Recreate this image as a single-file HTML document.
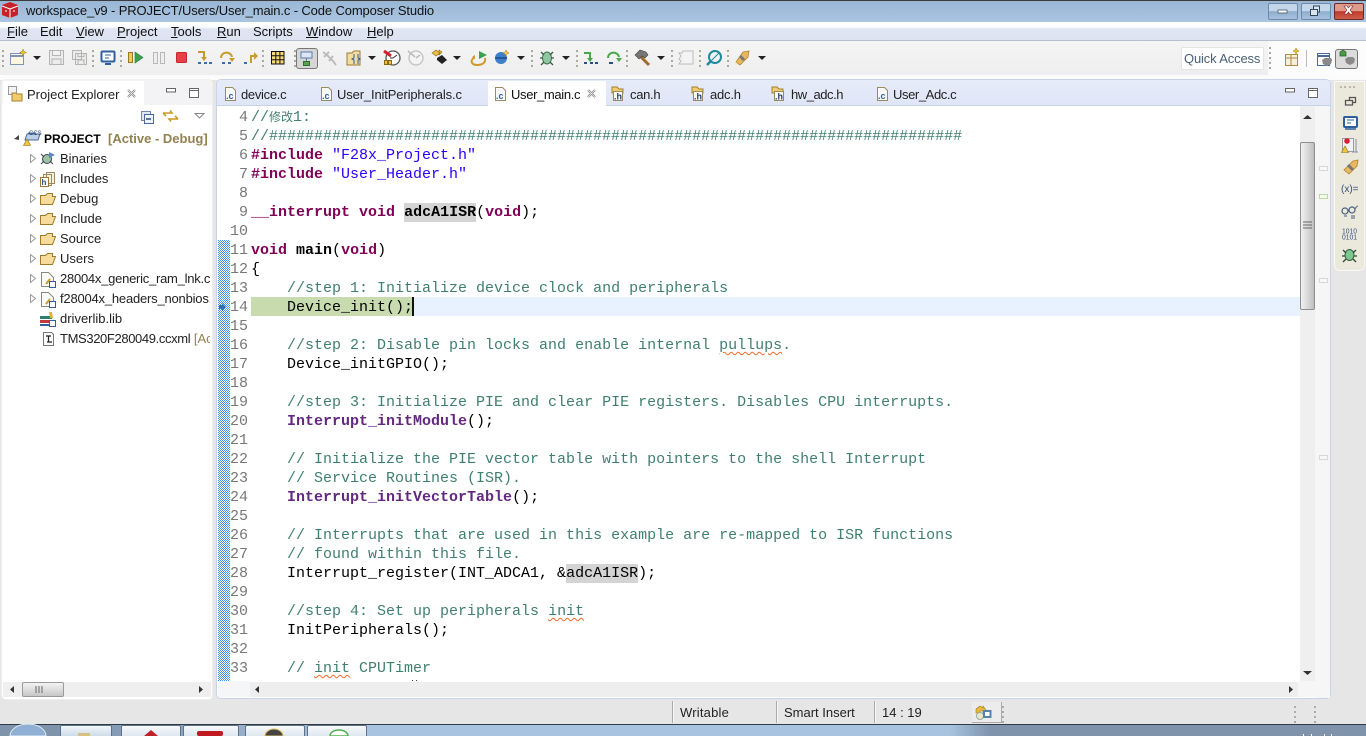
<!DOCTYPE html>
<html><head><meta charset="utf-8"><title>workspace_v9</title>
<style>
html,body{margin:0;padding:0;width:1366px;height:736px;overflow:hidden;background:#e6e6e6}
body{position:relative;font-family:"Liberation Sans","Noto Sans CJK SC",sans-serif;font-size:13px;color:#1a1a1a}
.a{position:absolute}
.t{position:absolute;white-space:nowrap;line-height:16px}
.m{position:absolute;top:24px;white-space:nowrap;line-height:16px;font-size:13px;color:#111}
.tab{position:absolute;top:87px;white-space:nowrap;line-height:16px;color:#222;letter-spacing:-.3px}
.tr{position:absolute;left:60px;white-space:nowrap;line-height:16px;color:#222}
pre,.code{margin:0;font-family:"Liberation Mono","Noto Sans CJK SC",monospace;font-size:15px;color:#000}
.l{height:19px;line-height:19px;white-space:pre}
.c{color:#3f7f6f}.k{color:#7f0055;font-weight:bold}.s{color:#2a00ff}.f{color:#642880;font-weight:bold}.b{font-weight:bold}
.h{background:#d4d4d4;display:inline-block;height:19px}
.w{text-decoration:underline wavy #f06a28;text-decoration-thickness:1px;text-underline-offset:2px}
.cj{font-size:12px;line-height:12px}
.sb{position:absolute;top:701px;width:1px;height:22px;background:#aaa;box-shadow:1px 0 0 #f7f7f7}
</style></head><body>

<!-- title bar -->
<div class="a" style="left:0;top:0;width:1366px;height:22px;background:linear-gradient(#98b6d4,#abc5e0)"></div>
<div class="a" style="left:0;top:0;width:1366px;height:1px;background:#3c3c3c"></div>
<div class="t" style="left:26px;top:3px;color:#111;font-size:13px;letter-spacing:-.13px">workspace_v9 - PROJECT/Users/User_main.c - Code Composer Studio</div>

<!-- window buttons -->
<div class="a" style="left:1268px;top:3px;width:28px;height:15px;border:1px solid #6f8aa8;border-radius:2px;background:linear-gradient(#c3d6ea 0 45%,#8fadcd 50%,#a6c1dd)"></div>
<div class="a" style="left:1301px;top:3px;width:28px;height:15px;border:1px solid #6f8aa8;border-radius:2px;background:linear-gradient(#c3d6ea 0 45%,#8fadcd 50%,#a6c1dd)"></div>
<div class="a" style="left:1334px;top:3px;width:28px;height:15px;border:1px solid #6e2a2a;border-radius:2px;background:linear-gradient(#e09a8c 0 45%,#c0392b 50%,#cf5f4a)"></div>

<!-- menu bar -->
<div class="a" style="left:0;top:22px;width:1366px;height:18px;background:linear-gradient(#ffffff 0,#fbfcfe 5px,#dfe4f2 7px,#dde3f1)"></div>
<div class="a" style="left:0;top:40px;width:1366px;height:1px;background:#b6c0cf"></div>
<div class="m" style="left:7px"><u>F</u>ile</div>
<div class="m" style="left:40px">Edit</div>
<div class="m" style="left:76px"><u>V</u>iew</div>
<div class="m" style="left:117px"><u>P</u>roject</div>
<div class="m" style="left:171px"><u>T</u>ools</div>
<div class="m" style="left:217px"><u>R</u>un</div>
<div class="m" style="left:253px">Scripts</div>
<div class="m" style="left:306px"><u>W</u>indow</div>
<div class="m" style="left:367px"><u>H</u>elp</div>

<!-- toolbar -->
<div class="a" style="left:0;top:41px;width:1366px;height:34px;background:linear-gradient(#f5f5f5,#eeeeee)"></div>
<div class="a" style="left:1268px;top:41px;width:98px;height:34px;background:#fcfcfc"></div>
<div class="a" style="left:0;top:75px;width:1366px;height:5px;background:#fbfbfb"></div>
<div class="a" style="left:1181px;top:47px;width:81px;height:21px;background:#fff;border:1px solid #e4e4e4;border-radius:2px"></div>
<div class="t" style="left:1184px;top:51px;color:#4a5f78;font-size:13px;letter-spacing:-.15px">Quick Access</div>
<div class="a" style="left:296px;top:48px;width:20px;height:19px;background:#d6d6d6;border:1px solid #777;border-radius:3px"></div>
<div class="a" style="left:1335px;top:49px;width:21px;height:18px;background:#dcdcdc;border:1px solid #777;border-radius:3px"></div>

<!-- left panel -->
<div class="a" style="left:2px;top:80px;width:210px;height:619px;background:#fff;border-radius:4px;box-shadow:0 0 0 1px #efefef"></div>
<div class="a" style="left:2px;top:80px;width:210px;height:25px;background:#f3f3f5;border-radius:4px 4px 0 0"></div>
<div class="a" style="left:3px;top:81px;width:141px;height:25px;background:#fff"></div>
<div class="t" style="left:27px;top:87px;color:#222">Project Explorer</div>

<!-- tree -->
<div class="a" style="left:3px;top:125px;width:207px;height:225px;overflow:hidden">
<div class="t" style="left:41px;top:6px;color:#000;font-weight:bold;font-size:12px">PROJECT</div>
<div class="t" style="left:105px;top:6px;color:#93814f;font-weight:bold">[Active - Debug]</div>
<div class="tr" style="left:57px;top:26px">Binaries</div>
<div class="tr" style="left:57px;top:46px">Includes</div>
<div class="tr" style="left:57px;top:66px">Debug</div>
<div class="tr" style="left:57px;top:86px">Include</div>
<div class="tr" style="left:57px;top:106px">Source</div>
<div class="tr" style="left:57px;top:126px">Users</div>
<div class="tr" style="left:57px;top:146px;letter-spacing:-.25px">28004x_generic_ram_lnk.cmd</div>
<div class="tr" style="left:57px;top:166px;letter-spacing:-.2px">f28004x_headers_nonbios.cmd</div>
<div class="tr" style="left:57px;top:186px">driverlib.lib</div>
<div class="tr" style="left:57px;top:206px"><span style="letter-spacing:-.37px">TMS320F280049.ccxml</span> <span style="color:#93814f">[Active]</span></div>
</div>

<!-- left scrollbar -->
<div class="a" style="left:3px;top:682px;width:208px;height:15px;background:#efefef"></div>
<div class="a" style="left:22px;top:682px;width:40px;height:13px;border:1px solid #9a9a9a;border-radius:2px;background:linear-gradient(#f2f2f2,#dedede 50%,#c6c6c6)"></div>

<!-- editor frame -->
<div class="a" style="left:217px;top:80px;width:1113px;height:618px;background:#fff;border-radius:4px;box-shadow:0 0 0 1px #c9d3e8"></div>
<div class="a" style="left:217px;top:80px;width:1113px;height:25px;background:linear-gradient(#e6ebf9,#dfe6f7);border-radius:4px 4px 0 0"></div>
<div class="a" style="left:217px;top:105px;width:1113px;height:1px;background:#c9d3e8"></div>
<div class="a" style="left:488px;top:81px;width:118px;height:25px;background:#fff"></div>
<div class="tab" style="left:241px">device.c</div>
<div class="tab" style="left:337px;letter-spacing:-.14px">User_InitPeripherals.c</div>
<div class="tab" style="left:511px;color:#111;letter-spacing:-.35px">User_main.c</div>
<div class="tab" style="left:630px">can.h</div>
<div class="tab" style="left:710px;letter-spacing:-.2px">adc.h</div>
<div class="tab" style="left:791px;letter-spacing:-.45px">hw_adc.h</div>
<div class="tab" style="left:893px;letter-spacing:-.4px">User_Adc.c</div>

<!-- current line -->
<div class="a" style="left:251px;top:297px;width:1049px;height:19px;background:#e8f2fe"></div>
<div class="a" style="left:251px;top:297px;width:162px;height:19px;background:#c7dbae"></div>
<div class="a" style="left:412px;top:297px;width:2px;height:19px;background:#111"></div>

<!-- line numbers -->
<div class="a code" style="left:226px;top:108px;width:22px;height:573px;overflow:hidden;text-align:right;color:#787878"><div class="l">4</div><div class="l">5</div><div class="l">6</div><div class="l">7</div><div class="l">8</div><div class="l">9</div><div class="l">10</div><div class="l">11</div><div class="l">12</div><div class="l">13</div><div class="l">14</div><div class="l">15</div><div class="l">16</div><div class="l">17</div><div class="l">18</div><div class="l">19</div><div class="l">20</div><div class="l">21</div><div class="l">22</div><div class="l">23</div><div class="l">24</div><div class="l">25</div><div class="l">26</div><div class="l">27</div><div class="l">28</div><div class="l">29</div><div class="l">30</div><div class="l">31</div><div class="l">32</div><div class="l">33</div></div>

<!-- code -->
<div class="a code" style="left:251px;top:108px;width:1049px;height:573px;overflow:hidden">
<div class="l"><span class="c">//<span class="cj">修改</span>1:</span></div>
<div class="l"><span class="c">//#############################################################################</span></div>
<div class="l"><span class="k">#include</span> <span class="s">"F28x_Project.h"</span></div>
<div class="l"><span class="k">#include</span> <span class="s">"User_Header.h"</span></div>
<div class="l"></div>
<div class="l"><span class="k">__interrupt</span> <span class="k">void</span> <span class="h b">adcA1ISR</span>(<span class="k">void</span>);</div>
<div class="l"></div>
<div class="l"><span class="k">void</span> <span class="b">main</span>(<span class="k">void</span>)</div>
<div class="l">{</div>
<div class="l">    <span class="c">//step 1: Initialize device clock and peripherals</span></div>
<div class="l">    Device_init();</div>
<div class="l"></div>
<div class="l">    <span class="c">//step 2: Disable pin locks and enable internal <span class="w">pullups</span>.</span></div>
<div class="l">    Device_initGPIO();</div>
<div class="l"></div>
<div class="l">    <span class="c">//step 3: Initialize PIE and clear PIE registers. Disables CPU interrupts.</span></div>
<div class="l">    <span class="f">Interrupt_initModule</span>();</div>
<div class="l"></div>
<div class="l">    <span class="c">// Initialize the PIE vector table with pointers to the shell Interrupt</span></div>
<div class="l">    <span class="c">// Service Routines (ISR).</span></div>
<div class="l">    <span class="f">Interrupt_initVectorTable</span>();</div>
<div class="l"></div>
<div class="l">    <span class="c">// Interrupts that are used in this example are re-mapped to ISR functions</span></div>
<div class="l">    <span class="c">// found within this file.</span></div>
<div class="l">    Interrupt_register(INT_ADCA1, &amp;<span class="h">adcA1ISR</span>);</div>
<div class="l"></div>
<div class="l">    <span class="c">//step 4: Set up peripherals <span class="w">init</span></span></div>
<div class="l">    InitPeripherals();</div>
<div class="l"></div>
<div class="l">    <span class="c">// <span class="w">init</span> CPUTimer</span></div>
</div>
<div class="a" style="left:412px;top:680px;width:1px;height:1px;background:#444;box-shadow:4px 0 0 #444"></div>

<!-- editor scrollbars -->
<div class="a" style="left:218px;top:681px;width:32px;height:16px;background:#f5f6f8"></div>
<div class="a" style="left:250px;top:682px;width:1048px;height:15px;background:#eeeeee"></div>
<div class="a" style="left:1298px;top:681px;width:32px;height:16px;background:#f6f6f6"></div>
<div class="a" style="left:1300px;top:106px;width:15px;height:575px;background:#efefef"></div>
<div class="a" style="left:1315px;top:106px;width:15px;height:592px;background:#f6f6f6"></div>
<div class="a" style="left:1300px;top:142px;width:13px;height:166px;border:1px solid #8f8f8f;border-radius:2px;background:linear-gradient(90deg,#f0f0f0,#dcdcdc 45%,#bdbdbd)"></div>
<div class="a" style="left:1319px;top:166px;width:7px;height:3px;border:1px solid #d8d8d8;background:#f8f8f8"></div>
<div class="a" style="left:1319px;top:194px;width:7px;height:3px;border:1px solid #bcd8a4;background:#f4faee"></div>
<div class="a" style="left:1319px;top:278px;width:7px;height:3px;border:1px solid #d8d8d8;background:#f8f8f8"></div>
<div class="a" style="left:1319px;top:455px;width:7px;height:3px;border:1px solid #d8d8d8;background:#f8f8f8"></div>

<!-- right trim -->
<div class="a" style="left:1334px;top:81px;width:29px;height:188px;background:#ebe8dc;border:1px solid #f8f8f4;border-radius:0 0 6px 6px"></div>

<!-- status -->
<div class="sb" style="left:672px"></div><div class="sb" style="left:776px"></div><div class="sb" style="left:874px"></div>
<div class="t" style="left:680px;top:705px;color:#222;letter-spacing:.2px">Writable</div>
<div class="t" style="left:784px;top:705px;color:#222">Smart Insert</div>
<div class="t" style="left:882px;top:705px;color:#222">14 : 19</div>
<div class="a" style="left:972px;top:702px;width:29px;height:20px;border-right:1px solid #aaa;border-bottom:1px solid #aaa;background:#ececec"></div>

<!-- taskbar -->
<div class="a" style="left:0;top:724px;width:1366px;height:12px;background:linear-gradient(90deg,#7f93ab 0,#7f93ab 60px,#a8c3e0 370px,#a8c3e0 950px,#7f93ab 990px,#7f93ab 1366px)"></div>
<div class="a" style="left:0;top:724px;width:1366px;height:1px;background:#2f3b47"></div>
<div class="a" style="left:60px;top:725px;width:50px;height:11px;background:linear-gradient(#f2f6fa,#c9d8e8);border:1px solid #5e7289;border-bottom:0;border-radius:2px 2px 0 0"></div>
<div class="a" style="left:121px;top:725px;width:58px;height:11px;background:linear-gradient(#f7f9fc,#dbe5ef);border:1px solid #5e7289;border-bottom:0;border-radius:2px 2px 0 0"></div>
<div class="a" style="left:183px;top:725px;width:54px;height:11px;background:linear-gradient(#f7f9fc,#dbe5ef);border:1px solid #5e7289;border-bottom:0;border-radius:2px 2px 0 0"></div>
<div class="a" style="left:245px;top:725px;width:58px;height:11px;background:linear-gradient(#f7f9fc,#dbe5ef);border:1px solid #5e7289;border-bottom:0;border-radius:2px 2px 0 0"></div>
<div class="a" style="left:307px;top:725px;width:58px;height:11px;background:linear-gradient(#f7f9fc,#dbe5ef);border:1px solid #5e7289;border-bottom:0;border-radius:2px 2px 0 0"></div>

<!-- icons overlay -->
<svg class="a" style="left:0;top:0" width="1366" height="736" viewBox="0 0 1366 736" fill="none">
<defs><pattern id="chk" width="2" height="2" patternUnits="userSpaceOnUse"><rect width="2" height="2" fill="#fff"/><rect width="1" height="1" fill="#3f90ea"/><rect x="1" y="1" width="1" height="1" fill="#3f90ea"/></pattern></defs>
<rect x="218" y="240" width="12" height="441" fill="url(#chk)" shape-rendering="crispEdges"/>
<!-- app logo -->
<path d="M2 5l8-3 8 3v10l-8 3-8-3z" fill="#c8202a"/><path d="M2 6l8 3 8-3M10 9v9M6 10v2M14 10v2" stroke="#fff" stroke-width="1"/>
<!-- window glyphs -->
<rect x="1278" y="10" width="9" height="3" fill="#fff" stroke="#46586c" stroke-width=".8"/>
<path d="M1310.500 9.500h7v6h-7zM1313.500 9v-3h6v6h-2" fill="#d8e4f0" stroke="#38495c"/>
<path d="M1344 6h3l1.500 2 1.500-2h3l-3 4 3 4h-3l-1.500-2-1.500 2h-3l3-4z" fill="#fff" stroke="#6e2a2a" stroke-width=".6"/>
<!-- grips -->
<g stroke="#a9a99c" stroke-width="2" stroke-dasharray="2 3">
<path d="M3 50v17M93 50v17M121 50v17M263 50v17M295 50v17M532 50v17M577 50v17M627 50v17M672 50v17M700 50v17M728 50v17M1270 47v22"/>
<path d="M1003 706v17M1295 706v17M1315 706v17" stroke="#aaa"/>
</g>
<!-- drop arrows -->
<g fill="#222">
<path d="M33 56h8l-4 4zM368 56h8l-4 4zM453 56h8l-4 4zM517 56h8l-4 4zM562 56h8l-4 4zM657 56h8l-4 4zM758 56h8l-4 4z"/>
</g>
<!-- new -->
<rect x="10.500" y="53.500" width="13" height="11" fill="#fdf6e0" stroke="#7e95b5"/><path d="M10 56h14" stroke="#7e95b5" stroke-width="2"/><path d="M23 49l1 2.500 2.500 1-2.500 1-1 2.500-1-2.500-2.500-1 2.500-1z" fill="#f4c430" stroke="#a07810" stroke-width=".5"/>
<!-- save gray -->
<path d="M49.500 50.500h14v14h-14zM52.500 50.500v5h8v-5M52 64v-5h9v5" stroke="#b4b4b4" fill="#ececec"/>
<path d="M72.500 50.500h9v9h-9zM75.500 53.500h11v11h-11zM78 53.500v3h6v-3M78 64v-4h6v4" stroke="#b4b4b4" fill="#ececec"/>
<!-- monitor -->
<rect x="101.500" y="51.500" width="13" height="10" rx="1" fill="#fff" stroke="#2f5f9e" stroke-width="2"/><path d="M105 55h6M105 58h4" stroke="#2f5f9e"/><path d="M105 64h6" stroke="#2f5f9e" stroke-width="2"/>
<!-- resume/suspend/stop -->
<rect x="128.500" y="52.500" width="4" height="10" fill="#f0cc60" stroke="#9a7a20"/><path d="M135 52l8 5.500-8 5.500z" fill="#3da04f" stroke="#2a8040" stroke-width=".6"/>
<path d="M153.500 52.500h4v11h-4zM160.500 52.500h4v11h-4z" fill="#eee" stroke="#b8b8b8"/>
<rect x="176.500" y="52.500" width="10" height="10" rx="1" fill="#e8404a" stroke="#c42a2a"/>
<!-- step into/over/return -->
<path d="M198 52h6v6" stroke="#c89c28" stroke-width="2"/><path d="M201 57h6l-3 4z" fill="#c89c28"/><path d="M198 63h3M204 63h3M209 63h3" stroke="#3a6ea8" stroke-width="2"/>
<path d="M221 58c0-7 10-7 11-1" stroke="#c89c28" stroke-width="2"/><path d="M229 58h6l-3 4z" fill="#c89c28"/><path d="M222 63h3M228 63h3" stroke="#3a6ea8" stroke-width="2"/>
<path d="M251 63v-7h5" stroke="#c89c28" stroke-width="2"/><path d="M254 52l4 4-4 4z" fill="#c89c28"/><path d="M244 63h3" stroke="#3a6ea8" stroke-width="2"/>
<!-- grid -->
<path d="M271.500 51.500h12.500v12.500h-12.500z" fill="#f8d878" stroke="#111"/><path d="M275.800 51v13M279.900 51v13M271 55.700h13M271 59.800h13" stroke="#111"/>
<!-- pressed -->
<path d="M301 52h11v6h-11z" fill="#dde6f4" stroke="#5a7fb0"/><path d="M306.500 58v4" stroke="#5a7fb0"/><rect x="303.500" y="61.500" width="6" height="4" fill="#5aa050" stroke="#2f7030"/>
<path d="M323 52l4 3 6 6 3 4M329 52l-5 5M333 56l-4 5" stroke="#bcbcbc" stroke-width="2"/>
<path d="M347 65v-12h5l2-2h6v14z" fill="#f4dca0" stroke="#9a7a30"/><path d="M354 54v4l-2 1 2 1v4M358 54v4l2 1-2 1v4" stroke="#2f5f9e"/>
<!-- clocks -->
<circle cx="393" cy="58" r="7" fill="#fff" stroke="#555" stroke-width="1.300"/><path d="M393 58l4-3M393 58h-3" stroke="#333"/><path d="M384 51l7 5" stroke="#d02030" stroke-width="3"/><path d="M384.500 60.500h3v4h-3zM388.500 60.500h3v4h-3z" fill="#f0c040" stroke="#8a6a10"/>
<circle cx="416" cy="58" r="7" fill="#f4f4f4" stroke="#c0c0c0" stroke-width="1.300"/><path d="M416 58l4-3M408 51l7 6" stroke="#bbb" stroke-width="1.500"/>
<!-- chip -->
<path d="M437 58l5-3 5 5-5 4-5-4z" fill="#222"/><path d="M432 53l4-3 4 3-4 3zM439 50l3 2-3 3z" fill="#eec040" stroke="#8a6a10" stroke-width=".6"/>
<!-- loop -->
<path d="M474 58c-4 2-3 7 3 7 6 0 9-3 8-7" stroke="#d09a2a" stroke-width="2"/><path d="M479 51l8 4-8 4z" fill="#3da04f"/><path d="M472 57l3-2v4z" fill="#d09a2a"/>
<!-- ball -->
<circle cx="501" cy="58" r="6" fill="#3f7fc8"/><path d="M495 58h12" stroke="#204a88" stroke-width="1.500"/><path d="M506 50l1 2 2 1-2 1-1 2-1-2-2-1 2-1z" fill="#f4d060" stroke="#a07810" stroke-width=".5"/>
<!-- bug -->
<ellipse cx="547" cy="58" rx="4.500" ry="6" fill="#8ec8a0" stroke="#4a6a50"/><path d="M541 52l3 3M553 52l-3 3M540 58h3M554 58h-3M541 65l3-3M553 65l-3-3" stroke="#3a5a40" stroke-width="1.300"/>
<!-- green steps -->
<path d="M584 53h6v6" stroke="#4aa84a" stroke-width="2"/><path d="M587 58h6l-3 4z" fill="#4aa84a"/><path d="M584 63h3M590 63h3M595 63h3" stroke="#2a5080" stroke-width="2"/>
<path d="M608 58c0-7 10-7 11-1" stroke="#4aa84a" stroke-width="2"/><path d="M616 58h6l-3 4z" fill="#4aa84a"/><path d="M609 63h4" stroke="#2a5080" stroke-width="2"/>
<!-- hammer -->
<path d="M640 56l9 9" stroke="#a06a30" stroke-width="3"/><path d="M635 55l5-5 6 2 2 3-3 3-3-2-3 3z" fill="#777" stroke="#444" stroke-width=".6"/>
<!-- gray -->
<path d="M679 53h3l1-2h10v13h-14l2-3-2-2 2-3z" fill="#f3f3f3" stroke="#bcbcbc"/>
<!-- teal search -->
<circle cx="715" cy="57" r="6" stroke="#1f8a9e" stroke-width="2"/><path d="M711 61l-4 4" stroke="#1f8a9e" stroke-width="2.500"/><path d="M711 61l8-8" stroke="#1f8a9e"/>
<!-- pen -->
<path d="M743 52l6-1-1 6-8 8-4-3z" fill="#e8b860" stroke="#b08430" stroke-width=".8"/><path d="M740 56l4 4" stroke="#777" stroke-width="3"/><path d="M736 62l-1 3 3-1z" fill="#f8e8b0"/>
<!-- perspectives -->
<path d="M1285.500 54.500h12v11h-12zM1285 58h12M1291 55v10" stroke="#b08a40" fill="#f6efdc"/><path d="M1296 48l1 2 2 1-2 1-1 2-1-2-2-1 2-1z" fill="#f4c430" stroke="#a07810" stroke-width=".5"/>
<path d="M1306.500 50v17" stroke="#bbb"/>
<path d="M1317.500 53.500h12v12h-12z" fill="#fff" stroke="#4a6a9a"/><path d="M1317 56h13" stroke="#4a6a9a" stroke-width="2"/><path d="M1322 60l3-2h6l1 2-1 4-4 2-4-2z" fill="#8a8a8a"/>
<path d="M1340 52l3-2 3 2v4h-6z" fill="#4a9a4a" stroke="#215a21" stroke-width=".7"/><path d="M1345 59l3-2h5l2 2-1 4-4 2-4-2z" fill="#8a8a8a"/>
<!-- project explorer tab -->
<path d="M8.500 86.500h8v8h-8z" fill="#f2f2f2" stroke="#999"/><path d="M12 93v8h10v-7h-5l-1-1z" fill="#f0cc70" stroke="#a57f28"/>
<path d="M128 90l7 7M135 90l-7 7" stroke="#777" stroke-width="2"/><path d="M128 90l7 7M135 90l-7 7" stroke="#fff" stroke-width=".7"/>
<rect x="166.500" y="88.500" width="9" height="3.500" fill="#fff" stroke="#666"/><path d="M189.500 88.500h9v9h-9z" fill="#fff" stroke="#666"/><path d="M189 90.500h10" stroke="#666"/>
<rect x="1285.500" y="88.500" width="9" height="3.500" fill="#fff" stroke="#666"/><path d="M1308.500 88.500h9v9h-9z" fill="#fff" stroke="#666"/><path d="M1308 90.500h10" stroke="#666"/>
<path d="M588 90l7 7M595 90l-7 7" stroke="#777" stroke-width="2"/><path d="M588 90l7 7M595 90l-7 7" stroke="#fff" stroke-width=".7"/>
<!-- file tabs -->
<g font-family="Liberation Sans" font-size="9" font-weight="bold" fill="#2f5f9e">
<path d="M225.500 87.500h7l3 3v10h-10zM321.500 87.500h7l3 3v10h-10zM495.500 87.500h7l3 3v10h-10zM877.500 87.500h7l3 3v10h-10z" fill="#fbfbfb" stroke="#9a8a60"/>
<text x="226" y="99">.c</text><text x="322" y="99">.c</text><text x="496" y="99">.c</text><text x="878" y="99">.c</text>
<path d="M612 89v-2h5l2 2h4v4h-11z" fill="#f0cc70" stroke="#a57f28"/><path d="M692 89v-2h5l2 2h4v4h-11z" fill="#f0cc70" stroke="#a57f28"/><path d="M772 89v-2h5l2 2h4v4h-11z" fill="#f0cc70" stroke="#a57f28"/>
<path d="M613.500 91.500h9v9h-9zM693.500 91.500h9v9h-9zM774.500 91.500h9v9h-9z" fill="#fbfbfb" stroke="#9a8a60"/>
<text x="614" y="99.500" fill="#223f66">.h</text><text x="694" y="99.500" fill="#223f66">.h</text><text x="775" y="99.500" fill="#223f66">.h</text>
</g>
<!-- view toolbar -->
<path d="M141.500 111.500h9v9h-9z" fill="#dfe8f5" stroke="#6a8ab0"/><path d="M144.500 114.500h9v9h-9z" fill="#eef3fb" stroke="#4a6a9a"/><path d="M146 119h5" stroke="#2a4a7a" stroke-width="1.500"/>
<path d="M163 113h9l-2-2.500M163 113l3 3M178 119h-9l2 2.500M178 119l-3-3" stroke="#c89c28" stroke-width="1.600"/>
<path d="M195 113.500h9l-4.500 4.500z" fill="#fff" stroke="#888"/>
<!-- tree icons -->
<path d="M14 139l5-4v5z" fill="#444"/>
<g fill="#fff" stroke="#9a9a9a">
<path d="M30.500 154.500l5 4-5 4zM30.500 174.500l5 4-5 4zM30.500 194.500l5 4-5 4zM30.500 214.500l5 4-5 4zM30.500 234.500l5 4-5 4zM30.500 254.500l5 4-5 4zM30.500 274.500l5 4-5 4zM30.500 294.500l5 4-5 4z"/>
</g>
<!-- project -->
<path d="M27 134h13l-2 6H25z" fill="#bcd0ea" stroke="#4a6a9a"/><path d="M28 133h8" stroke="#4a6a9a"/><path d="M27 139l-3.500 6.500h7z" fill="#f2c840" stroke="#8a6a10" stroke-width=".6"/>
<text x="29" y="135" font-family="Liberation Sans" font-size="6" fill="#2a4a7a">CCS</text>
<!-- binaries -->
<circle cx="47" cy="159" r="4.500" fill="#9ac4a4" stroke="#445"/><path d="M41 154l3 3M53 154l-3 3M41 164l3-3M53 164l-3-3" stroke="#445"/><path d="M49 152l6 3-6 3z" fill="#5a8ac0"/>
<!-- includes -->
<path d="M46.500 172.500h8v11h-8zM43.500 174.500h8v11h-8z" fill="#f6efdc" stroke="#9a8a60"/><path d="M40.500 177.500h8v9h-8z" fill="#fff" stroke="#9a7a30"/><text x="41.500" y="185" font-family="Liberation Sans" font-size="8" font-weight="bold" fill="#2f4f7f">h</text>
<!-- folders -->
<g fill="#f6dc9c" stroke="#a07a28">
<path d="M40.500 204.500v-9h5l2-2h5v3h3l-3 8z"/><path d="M40.500 224.500v-9h5l2-2h5v3h3l-3 8z"/><path d="M40.500 244.500v-9h5l2-2h5v3h3l-3 8z"/><path d="M40.500 264.500v-9h5l2-2h5v3h3l-3 8z"/>
</g>
<!-- cmd -->
<g fill="#fafafa" stroke="#8a8a7a"><path d="M41.500 272.500h7l5 5v9h-12zM41.500 292.500h7l5 5v9h-12z"/></g>
<path d="M46 284l4-5M46 304l4-5" stroke="#d09a2a" stroke-width="2"/>
<path d="M49.500 281.500h6v6h-6zM49.500 301.500h6v6h-6z" fill="#fff" stroke="#2f5f9e"/>
<!-- lib -->
<path d="M40 316h12v3H40z" fill="#2f7f6f"/><path d="M40 320h12v3H40z" fill="#c03a3a"/><path d="M40 324h12v2H40z" fill="#2f5f9e"/><path d="M49 312l3 0 1 6h-3z" fill="#e0b040"/><path d="M49.500 320.500h6v6h-6z" fill="#fff" stroke="#2f5f9e"/>
<!-- ccxml -->
<path d="M43.500 332.500h8l2 2v11h-10z" fill="#fafafa" stroke="#777"/><path d="M46 336h5M48.500 336v6M47 342h5" stroke="#222" stroke-width="1.200"/>
<!-- scrollbar arrows -->
<path d="M14 686v7l-4-3.500zM199 686v7l4-3.500zM259 686v7l-4-3.500zM1289 686v7l4-3.500z" fill="#333"/>
<path d="M1303 119h9l-4.500-4zM1303 671h9l-4.500 4z" fill="#333"/>
<path d="M36 686v7M39 686v7M42 686v7" stroke="#666"/>
<path d="M1303 222h9M1303 225h9M1303 228h9" stroke="#666"/>
<!-- current-line arrow -->
<path d="M219 305h3v-2l4 4-4 4v-2h-3z" fill="#2f6fb8"/>
<!-- right trim icons -->
<path d="M1340 87h2M1344 87h2M1349 87h2M1353 87h2" stroke="#a8a8a0" stroke-width="1.500"/>
<path d="M1349.500 100v-2.500h6v5h-3M1345.500 100.500h7v4.500h-7z" stroke="#555" stroke-width="1.300"/>
<rect x="1344" y="117" width="13" height="10" rx="1" fill="#fff" stroke="#2f5f9e" stroke-width="2"/><path d="M1347 120h7M1347 123h4" stroke="#2f5f9e"/><path d="M1345 129h11" stroke="#2f5f9e" stroke-width="1.500"/>
<path d="M1342.500 138.500h11v13h-11z" fill="#eef2f8" stroke="#9a9aa8"/><circle cx="1347" cy="141" r="2.800" fill="#d82030"/><path d="M1356 139v13M1352 152h6" stroke="#8090a8"/><path d="M1345 146l-3.500 6.500h7z" fill="#f0c840" stroke="#8a6a10" stroke-width=".6"/>
<path d="M1353 161l5-1-1 6-8 8-5-4z" fill="#e8b860" stroke="#b08430" stroke-width=".8"/><path d="M1348 165l5 5" stroke="#777" stroke-width="3"/><path d="M1343 172l-1 3 3-1z" fill="#f8e8b0"/>
<text x="1341" y="192" font-family="Liberation Sans" font-size="10" fill="#33507a">(x)=</text>
<circle cx="1345" cy="211" r="3" stroke="#4a5f80" stroke-width="1.200"/><circle cx="1352" cy="210" r="3" stroke="#4a5f80" stroke-width="1.200"/><path d="M1348 210l1 0M1355 209c1-2 2-3 3-3" stroke="#4a5f80"/><path d="M1344 216h3M1351 216h4M1351 218h4" stroke="#4a5f80"/>
<text x="1342" y="233.500" font-family="Liberation Sans" font-size="7.500" fill="#33507a" textLength="15" lengthAdjust="spacingAndGlyphs">1010</text><text x="1342" y="239.500" font-family="Liberation Sans" font-size="7.500" fill="#33507a" textLength="15" lengthAdjust="spacingAndGlyphs">0101</text>
<ellipse cx="1349.500" cy="255" rx="4.500" ry="5.500" fill="#7cc890" stroke="#3a5a40"/><path d="M1343 250l3 3M1356 250l-3 3M1342 256h3M1357 256h-3M1343 262l3-3M1356 262l-3-3" stroke="#2a4a30" stroke-width="1.300"/>
<!-- status icon -->
<path d="M976 709l4-3 3 2v-2l3 4-3 3v-2h-3v2h-4z" fill="#e8b840" stroke="#a07818" stroke-width=".6"/><circle cx="980" cy="716" r="3.500" fill="#eee8c0" stroke="#9aa"/><rect x="984" y="711" width="6.500" height="6" fill="#fff" stroke="#5a80b0" stroke-width="2"/>
<!-- taskbar bits -->
<path d="M10 736a18 12 0 0 1 36 0z" fill="#8fb0d4" stroke="#e4eef8"/>
<path d="M78 736v-3h12v3z" fill="#d8c080"/>
<path d="M144 736l7-6 7 6z" fill="#c0202a"/>
<rect x="197" y="731" width="26" height="5" rx="2" fill="#c01a20"/>
<path d="M265 736a9 7 0 0 1 18 0z" fill="#444" stroke="#ddc060"/>
<path d="M330 736a9 6 0 0 1 18 0z" fill="#fff" stroke="#50b050" stroke-width="1.500"/>
<path d="M1303 735h1M1311 735h1M1324 735h1M1331 735h1" stroke="#fff" stroke-width="2"/>
</svg>
</body></html>
